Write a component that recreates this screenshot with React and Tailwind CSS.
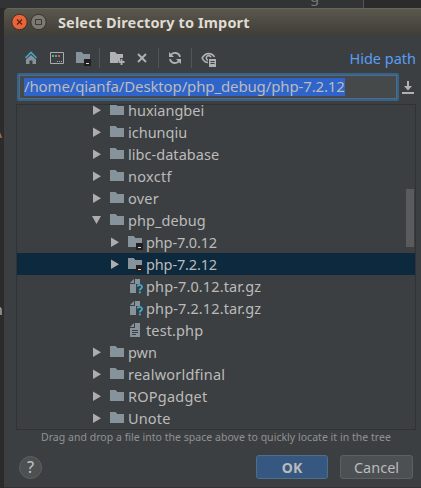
const FolderIcon = ({ linked }) => (
  <svg width="16" height="16" viewBox="0 0 16 16" className="block shrink-0" shapeRendering="crispEdges">
    <path d="M0 2h5l2 2h7v9H0z" fill="#87939a" />
    {linked && (
      <>
        <path d="M8 9h7v7H8z" fill="#231f20" />
        <path d="M10 13h3v1h-3z" fill="#d8d8d8" />
      </>
    )}
  </svg>
);

const FileIcon = ({ unknown }) => (
  <svg width="16" height="16" viewBox="0 0 16 16" className="block shrink-0">
    <path d="M7 1h5v14H2V6h5z" fill="#87939a" />
    <path d="M6 1v4H2z" fill="#87939a" />
    {unknown ? (
      <>
        <path d="M8 6h7v10H8z" fill="#3c3f41" />
        <path d="M9.500 8.500c.3-2.200 4.500-2 4.500.4 0 1.700-2.200 1.600-2.200 3.600" fill="none" stroke="#3fb0d8" strokeWidth="1.700" />
        <path d="M10.900 13.500h1.900v1.800h-1.900z" fill="#3fb0d8" />
      </>
    ) : (
      <path d="M4 8.500h6M4 10.500h6M4 12.500h4" stroke="#3c3f41" />
    )}
  </svg>
);

const Arrow = ({ open }) => (
  <svg width="10" height="10" viewBox="0 0 10 10" className="block shrink-0">
    <path d={open ? "M0 1h9L4.500 9z" : "M1 .5v9.500l8-4.750z"} fill="#adadad" />
  </svg>
);

const rows = [
  { name: "huxiangbei", kind: "dir", track: "tracking-[0px]" },
  { name: "ichunqiu", kind: "dir", track: "tracking-[0px]" },
  { name: "libc-database", kind: "dir", track: "tracking-[0.04px]" },
  { name: "noxctf", kind: "dir", track: "tracking-[0.3px]" },
  { name: "over", kind: "dir", track: "tracking-[0.2px]" },
  { name: "php_debug", kind: "dir", open: true, track: "tracking-[0.08px]" },
  { name: "php-7.0.12", kind: "link", track: "tracking-[-0.14px]" },
  { name: "php-7.2.12", kind: "link", selected: true, track: "tracking-[-0.14px]" },
  { name: "php-7.0.12.tar.gz", kind: "archive", track: "tracking-[0.13px]" },
  { name: "php-7.2.12.tar.gz", kind: "archive", track: "tracking-[0.13px]" },
  { name: "test.php", kind: "file", track: "tracking-[0.12px]" },
  { name: "pwn", kind: "dir", track: "tracking-[-0.04px]" },
  { name: "realworldfinal", kind: "dir", track: "tracking-[0.22px]" },
  { name: "ROPgadget", kind: "dir", track: "tracking-[0.22px]" },
  { name: "Unote", kind: "dir", track: "tracking-[0.15px]" },
];

function Row({ row }) {
  const top = row.kind === "dir";
  const isFile = row.kind === "archive" || row.kind === "file";
  return (
    <div className={`flex h-[22px] shrink-0 items-center ${top ? "pl-[75px]" : "pl-[93px]"} ${row.selected ? "bg-[#0d293e]" : ""}`}>
      <div className="w-[18px]">{!isFile && <Arrow open={row.open} />}</div>
      {isFile ? <FileIcon unknown={row.kind === "archive"} /> : <FolderIcon linked={row.kind === "link"} />}
      <span className={`ml-[2px] text-[14.5px] leading-[22px] whitespace-nowrap ${row.track}`}>{row.name}</span>
    </div>
  );
}

function TitleBar() {
  return (
    <div className="flex h-[27px] shrink-0 items-center rounded-tl-[5px] border-t border-[#68655a] bg-linear-to-b from-[#5a574d] to-[#403e38] pl-[7px]">
      <svg width="36" height="18" viewBox="0 0 36 18" className="block shrink-0">
        <circle cx="8.500" cy="9" r="7.700" fill="#ed6338" stroke="#35322c" />
        <path d="M6 6.500l5 5m0-5l-5 5" stroke="#512315" strokeWidth="1.200" />
        <circle cx="27.500" cy="9" r="7.700" fill="#7b7971" stroke="#35322c" />
        <path d="M24.500 6.500h6v5h-6z" fill="none" stroke="#3c3a35" />
      </svg>
      <span className="ml-[11px] text-[14.5px] leading-[20px] font-bold tracking-[0.13px] whitespace-nowrap text-[#dfdbd2]">Select Directory to Import</span>
    </div>
  );
}

const Separator = () => <div className="h-5 w-px shrink-0 bg-[#525557]" />;

function Toolbar() {
  return (
    <div className="flex h-[38px] shrink-0 items-center pt-2 pr-[5px] pl-[21px]">
      <svg width="13" height="14" viewBox="0 0 13 14" className="block shrink-0">
        <path d="M6 4l5 4.500V13H7.500V9.500h-3V13H1V8.500z" fill="#87939a" />
        <path d="M.5 7L6 1.500 11.500 7" fill="none" stroke="#40a5ca" strokeWidth="1.700" />
      </svg>
      <svg width="14" height="12" viewBox="0 0 14 12" className="ml-[12px] block shrink-0">
        <path d="M.5.5h13v11H.5z" fill="none" stroke="#a6adb1" />
        <path d="M2 3h2v2H2z" fill="#62b543" />
        <path d="M5 3h2v2H5z" fill="#40a5ca" />
        <path d="M8 3h2v2H8z" fill="#e05545" />
        <path d="M7 9h1v1H7zM9 9h1v1H9zM11 9h1v1h-1z" fill="#a6adb1" />
      </svg>
      <div className="ml-[12px]"><FolderIcon linked /></div>
      <div className="ml-[7px]"><Separator /></div>
      <svg width="15" height="14" viewBox="0 0 15 14" className="ml-[10px] block shrink-0">
        <path d="M0 1h5l2 2h6v4h-3v3H8v2H0z" fill="#afb1b3" />
        <path d="M11.500 8v6M8.500 11h6" stroke="#afb1b3" strokeWidth="1.800" />
      </svg>
      <svg width="10" height="10" viewBox="0 0 10 10" className="ml-[12px] block shrink-0">
        <path d="M1 1l8 8M9 1l-8 8" stroke="#afb1b3" strokeWidth="1.900" />
      </svg>
      <div className="ml-[11px]"><Separator /></div>
      <svg width="14" height="14" viewBox="0 0 14 14" className="ml-[9px] block shrink-0">
        <path d="M2.500 5A5 5 0 0 1 12 6M11.500 9A5 5 0 0 1 2 8" fill="none" stroke="#afb1b3" strokeWidth="1.800" />
        <path d="M1 1v5h5zM13 13V8H8z" fill="#afb1b3" />
      </svg>
      <div className="ml-[9px]"><Separator /></div>
      <svg width="16" height="15" viewBox="0 0 16 15" className="relative top-px ml-[9px] block shrink-0">
        <path d="M7 10.500C4 10.500 2 8 1.200 6 3 2.800 5 1.600 7.500 1.600S12.500 3 13.500 5" fill="none" stroke="#afb1b3" strokeWidth="1.600" />
        <path d="M7 8.300a2.400 2.400 0 1 1 3-3" fill="none" stroke="#afb1b3" strokeWidth="1.600" />
        <path d="M7 6h8v9H7z" fill="#3c3f41" />
        <path d="M8 7h7v8H8z" fill="#afb1b3" />
        <path d="M9.500 9.500h4M9.500 11.500h4" stroke="#3c3f41" />
      </svg>
      <span className="ml-auto text-[14.5px] leading-[20px] whitespace-nowrap text-[#589df6]">Hide path</span>
    </div>
  );
}

export default function App() {
  return (
    <div className="relative h-[488px] w-[421px] overflow-hidden bg-[#2b2b2b] pt-2 pl-1 font-['Noto_Sans','Open_Sans',sans-serif] text-[#bbbbbb]">
      <div className="absolute top-0 left-0 h-2 w-[364px] border-r border-[#555555] bg-[#313335]" />
      <span className="absolute top-[-14px] left-[310px] text-[15px] leading-5 text-[#777777]">g</span>
      <span className="absolute top-[123px] left-[-7px] text-[14px] leading-5 text-[#9b8264]">A</span>
      <span className="absolute top-[300px] left-[-6px] text-[14px] leading-5 text-[#a9b7c6]">n</span>
      <div className="relative flex h-[480px] flex-col rounded-tl-[5px] border-b border-[#323232] bg-[#3c3f41]">
        <TitleBar />
        <Toolbar />
        <div className="flex h-7 shrink-0 items-center pl-[13px]">
          <div className="flex h-7 w-[382px] items-center rounded-[2px] border-2 border-[#3d6185] bg-[#45494a] shadow-[inset_0_0_0_1px_#466d94]">
            <span className="ml-[5px] h-[18px] w-[321px] bg-[#2f65ca] text-[15px] leading-[17px] tracking-[-0.13px] whitespace-nowrap">/home/qianfa/Desktop/php_debug/php-7.2.12</span>
          </div>
          <svg width="12" height="13" viewBox="0 0 12 13" className="ml-[3px] block shrink-0">
            <path d="M5 0h2v5h3L6 9.500 2 5h3zM0 11h12v2H0z" fill="#afb1b3" />
          </svg>
        </div>
        <div className="relative mt-[3px] ml-3 flex h-[326px] w-[400px] shrink-0 flex-col overflow-hidden border border-[#323232]">
          <div className="-mt-[6px] flex flex-col">
            {rows.map((row) => <Row key={row.name} row={row} />)}
          </div>
          <div className="absolute top-[84px] right-px h-[58px] w-2 bg-[#595b5d]" />
        </div>
        <div className="mt-px h-[14px] shrink-0 pl-[37px] text-[10.5px] leading-[13px] tracking-[0.03px] whitespace-nowrap text-[#919191]">
          Drag and drop a file into the space above to quickly locate it in the tree
        </div>
        <div className="mt-[10px] flex h-6 shrink-0 items-center pl-[15px]">
          <button className="flex size-[23px] items-center justify-center rounded-full border border-[#5e6060] bg-[#4c5052] text-[16px] leading-none font-medium">?</button>
          <button className="ml-[214px] h-6 w-[72px] rounded-[3px] border border-[#4c708c] bg-[#365880] text-[14px] leading-[21px] font-bold">OK</button>
          <button className="ml-3 h-6 w-[73px] rounded-[3px] border border-[#5e6060] bg-[#4c5052] text-[14.5px] leading-[21px]">Cancel</button>
        </div>
      </div>
    </div>
  );
}
